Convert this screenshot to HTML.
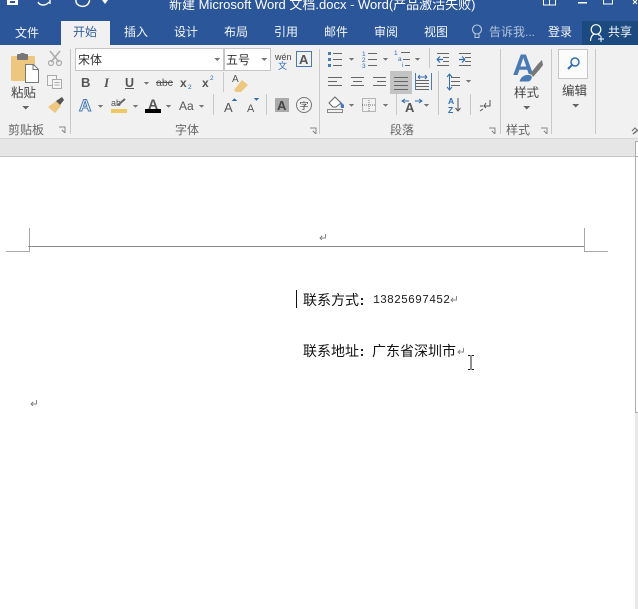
<!DOCTYPE html>
<html><head><meta charset="utf-8">
<style>
html,body{margin:0;padding:0;background:#fff;width:638px;height:609px;overflow:hidden}
svg{display:block}
text{font-family:"Liberation Sans","Noto Sans CJK SC",sans-serif;fill:#444}
.t{font-size:12px;fill:#fff;opacity:.95}
.g{font-size:12px;fill:#666}
.d{font-family:"WenQuanYi Zen Hei","Noto Sans CJK SC",sans-serif;font-size:14px;fill:#111}
.s{stroke:#666;stroke-width:1;fill:none}
.sep{stroke:#c8c8c8;stroke-width:1}
</style></head><body>
<svg width="638" height="609" viewBox="0 0 638 609" xmlns="http://www.w3.org/2000/svg" shape-rendering="crispEdges">
<rect width="638" height="609" fill="#fff"/>
<rect width="638" height="45" fill="#2b579a"/>
<rect y="45" width="638" height="93" fill="#f1f1f1"/>
<rect y="138" width="638" height="1" fill="#d5d5d5"/>
<rect y="139" width="638" height="17" fill="#e6e6e6"/>
<rect y="156" width="638" height="1" fill="#c6c6c6"/>
<rect x="61" y="21" width="49" height="24" fill="#f1f1f1"/>
<rect x="582" y="21" width="56" height="24" fill="#1b4a80"/>

<!-- QAT -->
<g shape-rendering="auto">
<path d="M7 0h11v5h-11z" fill="#fff"/><rect x="10" y="1" width="5" height="2" fill="#2b579a"/>
<path d="M38 2c2 4 8 4 11 0M50 0v4" stroke="#fff" stroke-width="1.4" fill="none"/>
<path d="M76 0c-1 7 11 9 13 2c1-2 0-2 0-2" stroke="#fff" stroke-width="1.5" fill="none"/>
<path d="M102 0l3 4l3-4z" fill="#fff"/>
<rect x="543.500" y="-1" width="12" height="6" stroke="#fff" fill="none"/>
<path d="M549.500 5v-5" stroke="#fff"/>
<rect x="578" y="2" width="9" height="1.500" fill="#fff"/>
<rect x="603.500" y="-1" width="9" height="5" stroke="#fff" fill="none"/>
<path d="M633 0l4 4M637 0l-4 4" stroke="#fff"/>
</g>

<text x="169" y="9" font-size="13" style="fill:#fff" shape-rendering="auto">新建 Microsoft Word 文档.docx - Word(产品激活失败)</text>

<!-- tabs -->
<text x="15" y="37" class="t">文件</text>
<text x="73" y="36" class="t" style="fill:#2b579a">开始</text>
<text x="124" y="36" class="t">插入</text>
<text x="174" y="36" class="t">设计</text>
<text x="224" y="36" class="t">布局</text>
<text x="274" y="36" class="t">引用</text>
<text x="324" y="36" class="t">邮件</text>
<text x="374" y="36" class="t">审阅</text>
<text x="424" y="36" class="t">视图</text>
<g shape-rendering="auto">
<circle cx="477" cy="29.500" r="4.500" fill="none" stroke="#b9c8de" stroke-width="1.100"/>
<path d="M475 34v3.500h4v-3.500" fill="none" stroke="#b9c8de"/>
<circle cx="596" cy="29.500" r="4.800" fill="none" stroke="#fff" stroke-width="1.200"/>
<path d="M590.500 41c0-4 2-6.500 4-7M598 34.500c1 .3 2 1 2.500 1.500" fill="none" stroke="#fff" stroke-width="1.200"/>
<path d="M598 39h6M601 36v6" stroke="#fff"/>
</g>
<text x="489" y="36" class="t" style="fill:#b9c8de">告诉我...</text>
<text x="548" y="36" class="t">登录</text>
<text x="608" y="36" class="t">共享</text>

<!-- group separators -->
<g class="sep">
<path d="M70.500 49v85M319.500 49v85M500.500 49v85M551.500 49v85M595.500 49v85"/>
<path d="M223.500 72v20M213.500 94v21M266.500 94v21M429.500 48v20M438.500 71v44M396.500 94v21M470.500 94v21"/>
</g>

<!-- clipboard -->
<g shape-rendering="auto">
<rect x="11" y="56" width="24" height="25" rx="1.500" fill="#eec77e"/>
<rect x="17" y="54" width="11" height="6" rx="1" fill="#777"/>
<rect x="20.500" y="53" width="4" height="3" fill="#777"/>
<path d="M25.500 64.500h8l5 5v13h-13z" fill="#fff" stroke="#777"/>
<path d="M33 64.500v5h5" fill="none" stroke="#777"/>
<path d="M50 51l9 11M60 51l-9 11" stroke="#aaa" stroke-width="1.500"/>
<circle cx="51" cy="63" r="2.500" fill="none" stroke="#aaa" stroke-width="1.200"/>
<circle cx="59" cy="63" r="2.500" fill="none" stroke="#aaa" stroke-width="1.200"/>
<rect x="47.500" y="75.500" width="9" height="10" fill="#f5f5f5" stroke="#aaa"/>
<rect x="52.500" y="79.500" width="9" height="9" fill="#f5f5f5" stroke="#aaa"/>
<path d="M54.500 82.500h5M54.500 85h5" stroke="#aaa"/>
<path d="M48 107l8-6l5 5l-6 7z" fill="#eec77e"/>
<path d="M56 101l6-4l2 3l-4 5z" fill="#555"/>
</g>
<text x="11" y="97" font-size="12.500" style="fill:#444">粘贴</text>
<path d="M22 106h7l-3.500 3.500z" fill="#666"/>
<text x="8" y="134" class="g">剪贴板</text>
<path d="M59 127h6v6M62 130l3 3" fill="none" stroke="#888"/>

<!-- font -->
<rect x="75.500" y="48.500" width="148" height="22" fill="#fff" stroke="#c6c6c6"/>
<rect x="224.500" y="48.500" width="46" height="22" fill="#fff" stroke="#c6c6c6"/>
<text x="78" y="64" font-size="12" style="fill:#333">宋体</text>
<text x="226" y="64" font-size="12" style="fill:#333">五号</text>
<path d="M214 58h6l-3 3zM261 58h6l-3 3zM144 82h5l-2.500 3zM98 105h5l-2.500 3zM133 105h5l-2.500 3zM166 105h5l-2.500 3zM199 105h5l-2.500 3z" fill="#777"/>
<text x="275" y="60" font-size="9" style="fill:#444">wén</text>
<text x="278" y="69" font-size="9" style="fill:#2f6db0">文</text>
<rect x="296.500" y="51.500" width="15" height="15" fill="none" stroke="#4a7ab5"/>
<text x="299" y="64" font-size="13" font-weight="bold" style="fill:#555">A</text>

<text x="81" y="87" font-size="13" font-weight="bold" style="fill:#555">B</text>
<text x="104" y="87" font-size="13" font-weight="bold" font-style="italic" style="font-family:'Liberation Serif',serif;fill:#555">I</text>
<text x="125" y="87" font-size="12.500" font-weight="bold" style="fill:#555">U</text>
<rect x="125" y="88" width="9" height="1" fill="#555"/>
<text x="156" y="86" font-size="10.500" style="fill:#555">abc</text>
<rect x="156" y="82" width="17" height="1" fill="#555"/>
<text x="180" y="87" font-size="12" font-weight="bold" style="fill:#555">x</text>
<text x="188" y="89" font-size="6.500" style="fill:#2f6db0">2</text>
<text x="202" y="87" font-size="12" font-weight="bold" style="fill:#555">x</text>
<text x="210" y="80" font-size="6.500" style="fill:#2f6db0">2</text>
<g shape-rendering="auto">
<path d="M234 90l8-10l6 5l-7 7h-5z" fill="#eec77e"/>
<text x="232" y="82" font-size="10" style="fill:#555">A</text>
</g>

<text x="79" y="111" font-size="17" font-weight="bold" style="fill:#f4f7fb;stroke:#4a7ab5;stroke-width:1" shape-rendering="auto">A</text>
<text x="111" y="106" font-size="9" style="fill:#555">ab</text>
<path d="M118 105l7-6" stroke="#666" stroke-width="2" shape-rendering="auto"/>
<rect x="111" y="109" width="16" height="4" fill="#eec95d"/>
<text x="148" y="109" font-size="14" font-weight="bold" style="fill:#555">A</text>
<rect x="145" y="109" width="16" height="4" fill="#000"/>
<text x="179" y="110" font-size="12" style="fill:#555">Aa</text>
<text x="224" y="112" font-size="13" style="fill:#555">A</text>
<path d="M232 101h5l-2.500-3z" fill="#2f6db0"/>
<text x="247" y="112" font-size="11" style="fill:#555">A</text>
<path d="M254 98h5l-2.500 3z" fill="#2f6db0"/>
<rect x="275" y="98" width="14" height="14" fill="#aaa"/>
<text x="277" y="110" font-size="13" font-weight="bold" style="fill:#444">A</text>
<circle cx="304" cy="105" r="7.500" fill="none" stroke="#777" shape-rendering="auto"/>
<text x="299.500" y="109" font-size="9" style="fill:#444">字</text>
<text x="175" y="134" class="g">字体</text>
<path d="M310 128h6v6M313 131l3 3" fill="none" stroke="#888"/>

<!-- paragraph -->
<g fill="#4a7ab5">
<rect x="328" y="52" width="3" height="3"/><rect x="328" y="58" width="3" height="3"/><rect x="328" y="64" width="3" height="3"/>
</g>
<path d="M333 53.500h9M333 59.500h9M333 65.500h9M368 53.500h9M368 59.500h9M368 65.500h9M401 52.500h9M403 59.500h7M405 65.500h5" stroke="#666"/>
<g font-size="6.500"><text x="362" y="56" style="fill:#2f6db0">1</text><text x="362" y="62" style="fill:#2f6db0">2</text><text x="362" y="68" style="fill:#2f6db0">3</text><text x="394" y="55" style="fill:#2f6db0">1</text><text x="398" y="61" style="fill:#2f6db0">a</text><text x="402" y="67" style="fill:#2f6db0">i</text></g>
<path d="M349 58h5l-2.500 3zM383 58h5l-2.500 3zM415 58h5l-2.500 3zM466 80h5l-2.500 3zM349 104h5l-2.500 3zM383 104h5l-2.500 3zM424 104h5l-2.500 3z" fill="#777"/>
<path d="M437 53.500h12M443 57.500h6M443 61.500h6M437 65.500h12M459 53.500h12M465 57.500h6M465 61.500h6M459 65.500h12" stroke="#666"/>
<path d="M437 59.500h6M437 59.500l3-3M437 59.500l3 3M459 59.500h6M465 59.500l-3-3M465 59.500l-3 3" stroke="#2f6db0" stroke-width="1.200" shape-rendering="auto"/>

<rect x="390" y="71" width="22" height="23" fill="#c3c3c3"/>
<path d="M328 77.500h14M328 81.500h9M328 85.500h14M351 77.500h13M353 81.500h9M351 85.500h13M373 77.500h13M377 81.500h9M373 85.500h13M394 77.500h14M394 81.500h14M394 85.500h14M394 89.500h14M415 80.500h14M415 83.500h14M415 86.500h14M415 89.500h14" stroke="#666"/>
<path d="M415.500 73v17M431.500 73v17" stroke="#4a7ab5"/>
<path d="M418 77h9M418 77l2-2M418 77l2 2M427 77l-2-2M427 77l-2 2" stroke="#2f6db0" shape-rendering="auto"/>
<path d="M451 77.500h9M451 81.500h9M451 85.500h9" stroke="#666"/>
<path d="M449.500 75v14M447 77l2.500-3l2.500 3M447 87l2.500 3l2.500-3" stroke="#2f6db0" fill="none" shape-rendering="auto"/>

<g shape-rendering="auto">
<path d="M329 103l6-6l6 6l-5 4h-3z" fill="#fff" stroke="#666"/>
<path d="M340 101l4 4v3h-3z" fill="#4a7ab5"/>
<rect x="327.500" y="109.500" width="15" height="3" fill="#f1f1f1" stroke="#888"/>
</g>
<rect x="362.500" y="98.500" width="13" height="13" fill="none" stroke="#777" stroke-dasharray="1 1"/>
<path d="M369 98v13M362 105h13" stroke="#777" stroke-dasharray="1 1"/>
<text x="405" y="112" font-size="13" font-weight="bold" style="fill:#555">A</text>
<path d="M405 103l-3-2l3-2M419 103l3-2l-3-2M403 101h6M415 101h6" stroke="#2f6db0" fill="none" shape-rendering="auto"/>
<text x="448" y="104" font-size="8.500" font-weight="bold" style="fill:#2f6db0">A</text>
<text x="448" y="113" font-size="8.500" font-weight="bold" style="fill:#2f6db0">Z</text>
<path d="M458 98v13M455.500 108l2.500 3l2.500-3" stroke="#555" fill="none" shape-rendering="auto"/>
<path d="M490 100v6h-6M486 103l-2 3l2 2M480 106h3M483 109l-3 2" stroke="#555" fill="none" shape-rendering="auto"/>
<text x="390" y="134" class="g">段落</text>
<path d="M489 128h6v6M492 131l3 3" fill="none" stroke="#888"/>

<!-- styles -->
<g shape-rendering="auto">
<text x="512.500" y="75" font-size="30" font-weight="bold" style="fill:#4a7ab5">A</text>
<path d="M530 74l8-10l4-4l1 5l-3 4l-7 8z" fill="#777"/>
<path d="M519 82c1-6 7-9 12-7c3 2 0 7-3 7z" fill="#4a7ab5" stroke="#f1f1f1"/>
</g>
<text x="514" y="97" font-size="12.500" style="fill:#444">样式</text>
<path d="M523 106h7l-3.500 3.500z" fill="#666"/>
<text x="506" y="134" class="g">样式</text>
<path d="M541 128h6v6M544 131l3 3" fill="none" stroke="#888"/>

<!-- edit -->
<rect x="558.500" y="49.500" width="29" height="29" fill="#fbfbfb" stroke="#c6c6c6"/>
<g shape-rendering="auto">
<circle cx="575" cy="62" r="4" fill="none" stroke="#2f6db0" stroke-width="1.500"/>
<path d="M572 65l-4 4" stroke="#2f6db0" stroke-width="2"/>
<path d="M633 134l5-4" stroke="#777" stroke-width="1.500"/>
<path d="M632 131l3-3l3 3" stroke="#777" stroke-width="1.200" fill="none"/>
</g>
<text x="562" y="95" font-size="12.500" style="fill:#444">编辑</text>
<path d="M572 104h7l-3.500 3.500z" fill="#666"/>

<!-- scrollbar -->
<rect x="635" y="157" width="3" height="452" fill="#e6e6e6"/>
<rect x="635" y="412" width="3" height="197" fill="#e9e9e9"/>
<rect x="635" y="141" width="3" height="271" fill="#fff"/>
<rect x="635" y="141" width="1" height="271" fill="#ababab"/>
<rect x="635" y="141" width="3" height="1" fill="#ababab"/>
<rect x="635" y="156" width="3" height="1" fill="#ababab"/>
<rect x="635" y="412" width="3" height="1" fill="#ababab"/>

<!-- header marks -->
<rect x="29" y="228" width="1" height="24" fill="#a8a8a8"/>
<rect x="6" y="251" width="24" height="1" fill="#a8a8a8"/>
<rect x="28" y="246" width="556" height="1" fill="#8a8a8a"/>
<rect x="584" y="228" width="1" height="24" fill="#a8a8a8"/>
<rect x="584" y="251" width="24" height="1" fill="#a8a8a8"/>

<!-- return marks -->
<g stroke="#888" fill="none">
<path d="M325.500 234v4h-5M322 236l-2 2l2 2"/>
<path d="M456.500 296v4h-5M453 298l-2 2l2 2"/>
<path d="M463.500 348v4h-5M460 350l-2 2l2 2"/>
<path d="M36.500 400v4h-5M33 402l-2 2l2 2"/>
</g>

<!-- doc text -->
<rect x="296" y="290" width="1" height="18" fill="#111"/>
<text x="303" y="305" class="d">联系方式</text>
<rect x="361" y="298" width="2" height="2" fill="#222"/><rect x="361" y="303" width="2" height="2" fill="#222"/>
<text x="373" y="303" font-size="11.500" style="font-family:'Liberation Mono',monospace;fill:#222" textLength="77">13825697452</text>
<text x="303" y="356" class="d">联系地址</text>
<rect x="361" y="349" width="2" height="2" fill="#222"/><rect x="361" y="354" width="2" height="2" fill="#222"/>
<text x="372" y="356" class="d">广东省深圳市</text>

<!-- I-beam -->
<path d="M468 355.500h2.500M471.500 355.500h2.500M468 369.500h2.500M471.500 369.500h2.500M471 356v13" stroke="#222"/>
</svg>
</body></html>
